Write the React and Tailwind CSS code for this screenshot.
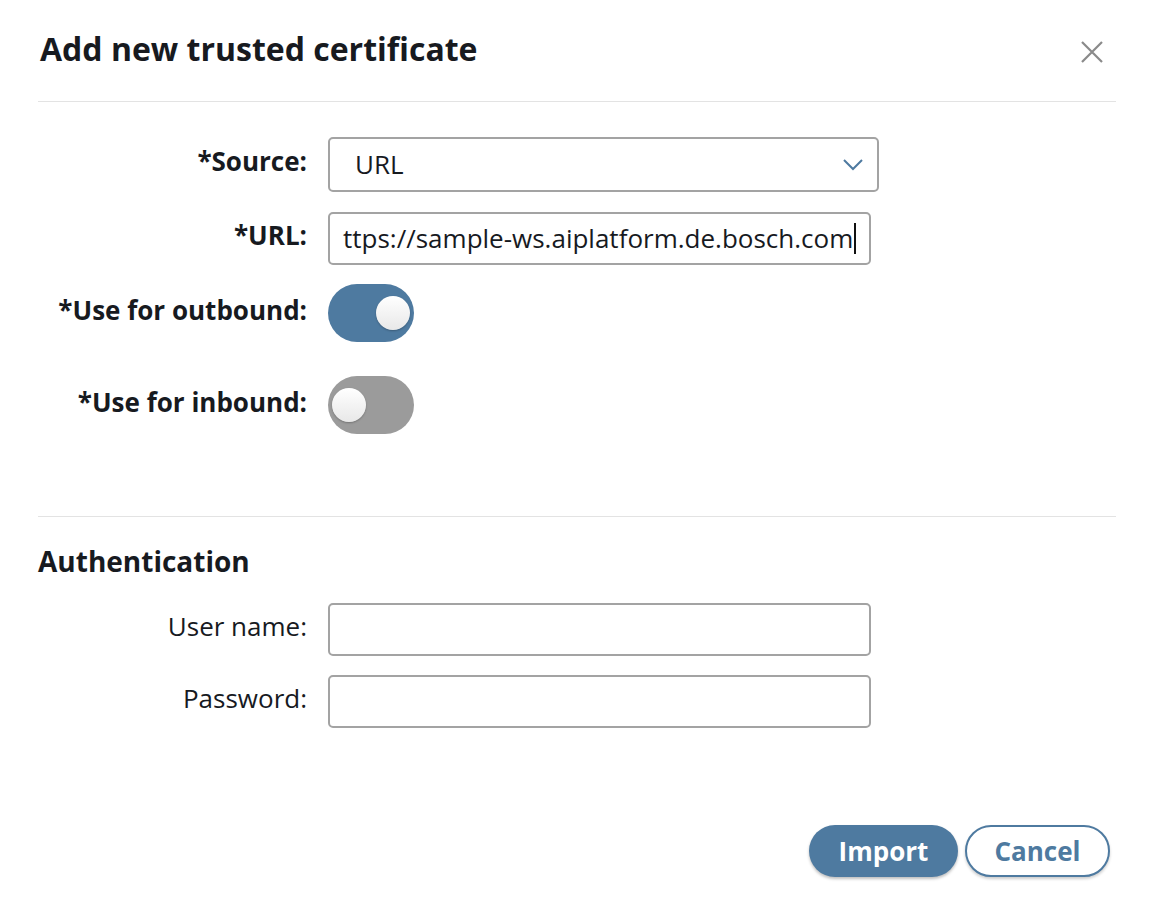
import React, { useState } from 'react';

const font = { fontFamily: '"Open Sans", "Noto Sans", sans-serif' };

function Toggle({ on, onChange }) {
  return (
    <button
      type="button"
      onClick={() => onChange(!on)}
      className={`flex h-[58px] w-[86px] items-center rounded-full px-[4px] ${
        on ? 'justify-end bg-[#4e7aa0]' : 'justify-start bg-[#9b9b9b]'
      }`}
    >
      <span className="block h-[34px] w-[34px] rounded-full bg-gradient-to-b from-white to-[#e8e8e8] shadow-[0_1px_2px_rgba(0,0,0,0.25)]" />
    </button>
  );
}

function Row({ label, bold = true, children, className = '' }) {
  return (
    <div className={`grid grid-cols-[269px_1fr] items-center gap-x-[21px] ${className}`}>
      <label
        className={`pb-[7px] text-right text-[26px] leading-none text-[#171a1f] ${
          bold ? 'font-bold' : 'font-normal'
        }`}
      >
        {label}
      </label>
      <div>{children}</div>
    </div>
  );
}

export default function App() {
  const [outbound, setOutbound] = useState(true);
  const [inbound, setInbound] = useState(false);

  return (
    <div style={font} className="min-h-[906px] w-[1154px] bg-white text-[#171a1f]">
      {/* Header */}
      <div className="mx-[38px] flex h-[102px] items-center justify-between border-b border-[#e3e3e3]">
        <h1 className="ml-[2px] mb-[3px] text-[32px] font-bold leading-none">Add new trusted certificate</h1>
        <button type="button" className="mr-[12px] mt-[2px] text-[#8a8a8a]">
          <svg width="24" height="24" viewBox="0 0 24 24" fill="none" stroke="currentColor" strokeWidth="2.2">
            <path d="M2 2 L22 22 M22 2 L2 22" />
          </svg>
        </button>
      </div>

      {/* Main form */}
      <div className="mx-[38px] border-b border-[#e3e3e3] pb-[82px] pt-[35px]">
        <Row label="*Source:">
          <div className="flex h-[55px] w-[551px] items-center justify-between rounded-[5px] border-2 border-[#a3a3a3] pl-[25px] pr-[14px] text-[26px]">
            <span>URL</span>
            <svg width="20" height="12" viewBox="0 0 20 12" fill="none" stroke="#4e7aa0" strokeWidth="2">
              <path d="M1 1 L10 10 L19 1" />
            </svg>
          </div>
        </Row>
        <Row label="*URL:" className="mt-[20px]">
          <div className="flex h-[53px] w-[543px] items-center rounded-[5px] border-2 border-[#a3a3a3] pl-[13px] text-[26px]">
            <span>ttps://sample-ws.aiplatform.de.bosch.com</span>
            <span className="ml-[1px] inline-block h-[31px] w-[2px] bg-[#111]" />
          </div>
        </Row>
        <Row label="*Use for outbound:" className="mt-[19px]">
          <Toggle on={outbound} onChange={setOutbound} />
        </Row>
        <Row label="*Use for inbound:" className="mt-[34px]">
          <Toggle on={inbound} onChange={setInbound} />
        </Row>
      </div>

      {/* Authentication */}
      <div className="mx-[38px] pt-[30px]">
        <h2 className="text-[28px] font-bold leading-none">Authentication</h2>
        <Row label="User name:" bold={false} className="mt-[28px]">
          <input
            type="text"
            className="h-[53px] w-[543px] rounded-[5px] border-2 border-[#a3a3a3] px-[13px] text-[26px] outline-none"
          />
        </Row>
        <Row label="Password:" bold={false} className="mt-[19px]">
          <input
            type="password"
            className="h-[53px] w-[543px] rounded-[5px] border-2 border-[#a3a3a3] px-[13px] text-[26px] outline-none"
          />
        </Row>
      </div>

      {/* Footer */}
      <div className="mx-[38px] mt-[97px] flex justify-end gap-[7px] pr-[6px]">
        <button
          type="button"
          className="h-[52px] w-[149px] rounded-full bg-[#4e7aa0] text-[26px] font-bold text-white shadow-[0_2px_3px_rgba(0,0,0,0.25)]"
        >
          Import
        </button>
        <button
          type="button"
          className="h-[52px] w-[145px] rounded-full border-2 border-[#4e7aa0] bg-white text-[26px] font-bold text-[#4e7aa0] shadow-[0_2px_3px_rgba(0,0,0,0.2)]"
        >
          Cancel
        </button>
      </div>
    </div>
  );
}
